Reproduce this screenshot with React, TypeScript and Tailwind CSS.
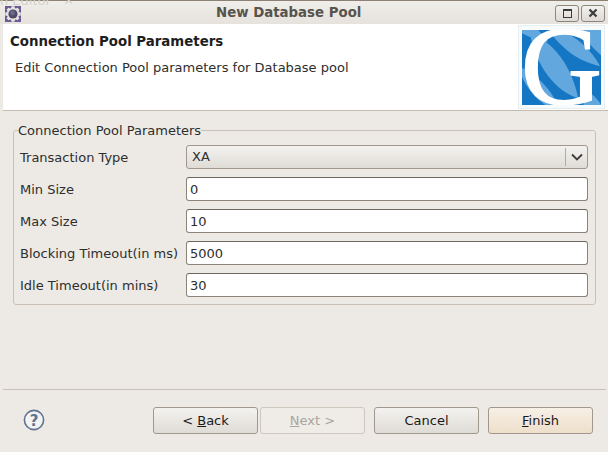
const FONT = "font-['DejaVu_Sans',sans-serif]";

function AppIcon() {
  const teeth = [0, 45, 90, 135, 180, 225, 270, 315];
  return (
    <svg width="16" height="16" viewBox="0 0 16 16">
      <rect width="16" height="16" fill="#6b5a94" />
      {teeth.map((a) => (
        <rect key={a} x="6.5" y="0.5" width="3" height="15" fill="#e6e4e0" transform={`rotate(${a} 8 8)`} />
      ))}
      <circle cx="8" cy="8" r="6.2" fill="#e6e4e0" />
      <circle cx="8" cy="8" r="4.6" fill="#4f4a68" />
      <circle cx="7.5" cy="7" r="2.4" fill="#6c688a" />
    </svg>
  );
}

function WindowButton({ children }: { children: React.ReactNode }) {
  return (
    <div className="w-6 h-[17px] flex items-center justify-center border border-[#8d877e] rounded-[3px] bg-gradient-to-b from-[#f3f1ee] to-[#dedad4]">
      {children}
    </div>
  );
}

function Logo() {
  const feathers = [
    "M8 4 C 30 10 50 36 56 68 C 34 62 14 36 8 4 Z",
    "M24 -4 C 46 0 66 14 78 36 C 56 32 36 16 24 -4 Z",
    "M-4 36 C 14 44 32 60 38 82 C 18 76 2 58 -4 36 Z",
    "M-2 -2 L 14 -2 C 20 4 24 8 26 12 C 14 10 4 6 -2 2 Z",
    "M58 -2 L 80 -2 L 80 26 C 70 18 62 8 58 -2 Z",
    "M60 58 C 70 62 76 70 80 76 L 62 78 Z",
  ];
  return (
    <div className="w-[87px] h-[84px] border border-[#e6eef2] bg-[#f7fbfc] flex items-center justify-center">
      <svg width="79" height="75" viewBox="0 0 79 75" className="block">
        <rect width="79" height="75" fill="#1576c4" />
        {feathers.map((d) => (
          <path key={d} d={d} fill="#62a8de" />
        ))}
        <text
          x="-1"
          y="74"
          fontFamily="'Liberation Serif', serif"
          fontSize="112"
          fill="#ffffff"
          stroke="#ffffff"
          strokeWidth="1.5"
        >
          G
        </text>
      </svg>
    </div>
  );
}

function Field({ label, value }: { label: string; value: string }) {
  return (
    <div className="flex items-center h-6">
      <label className="w-[166px] pt-[1px] text-[13px] text-[#2e2e2e] whitespace-nowrap">{label}</label>
      <input
        readOnly
        value={value}
        className="w-[402px] h-6 pl-[3px] bg-white border border-[#8b8379] border-t-[#6f675d] rounded-[3px] text-[13px] text-[#2e2e2e] outline-none"
      />
    </div>
  );
}

function WizardButton({
  children,
  disabled,
  primary,
}: {
  children: React.ReactNode;
  disabled?: boolean;
  primary?: boolean;
}) {
  let look = "border-[#a0988d] from-[#f4f2ef] to-[#dfdcd6] text-[#1a1a1a]";
  if (primary) look = "border-[#a0988d] from-[#f7f0e6] to-[#eedfcb] text-[#1a1a1a]";
  if (disabled) look = "border-[#cdc7be] from-[#efece8] to-[#efece8] text-[#a9a49c]";
  return (
    <button className={`w-[105px] h-[27px] border rounded-[3px] bg-gradient-to-b text-[13px] ${look}`}>
      {children}
    </button>
  );
}

export default function App() {
  return (
    <div className={`${FONT} relative w-[608px] h-[452px] overflow-hidden flex flex-col bg-[#edeae5]`}>
      {/* title bar */}
      <div className="relative h-6 shrink-0 flex items-center border-t border-[#8c8174] bg-gradient-to-b from-[#f0eeea] to-[#e6e2dc]">
        <span className="absolute left-0 -top-[10px] text-[13px] text-[#d5d1ca] whitespace-pre">n Editor   ✕</span>
        <div className="relative ml-[5px] mt-[2px]">
          <AppIcon />
        </div>
        <span className="absolute left-[216px] top-[2px] text-[13.33px] font-bold text-[#57534d]">New Database Pool</span>
        <div className="ml-auto mr-[3px] flex gap-[2px] mt-[1px]">
          <WindowButton>
            <div className="w-[9px] h-[9px] border border-[#3c3c3c] border-t-2" />
          </WindowButton>
          <WindowButton>
            <svg width="10" height="10" viewBox="0 0 10 10">
              <path d="M1.5 1.5 L8.5 8.5 M8.5 1.5 L1.5 8.5" stroke="#3c3c3c" strokeWidth="2.2" />
            </svg>
          </WindowButton>
        </div>
      </div>

      {/* header */}
      <div className="ml-[3px] h-[87px] shrink-0 flex justify-between bg-white border-b border-[#c4bcb1]">
        <div className="pl-[7px] pt-[9px]">
          <h1 className="text-[13.33px] leading-[17px] font-bold text-[#1e1e1e]">Connection Pool Parameters</h1>
          <p className="mt-[9px] ml-[5px] text-[13px] leading-[17px] text-[#2e2e2e]">
            Edit Connection Pool parameters for Database pool
          </p>
        </div>
        <div className="mr-[3px] pt-[1px]">
          <Logo />
        </div>
      </div>

      {/* form */}
      <div className="h-[278px] shrink-0 pl-[13px] pt-[11px]">
        <fieldset className="w-[583px] h-[183px] border border-[#c9c1b6] rounded-[3px] pl-[6px] pt-[6px]">
          <legend className="-ml-[2px] text-[13px] leading-[17px] text-[#2e2e2e]">Connection Pool Parameters</legend>
          <div className="flex flex-col gap-2">
            <div className="flex items-center h-6">
              <label className="w-[166px] pt-[1px] text-[13px] text-[#2e2e2e]">Transaction Type</label>
              <div className="w-[402px] h-6 flex items-center pl-[5px] border border-[#a0988d] rounded-[3px] bg-gradient-to-b from-[#f4f2ef] to-[#dfdcd6] text-[13px] text-[#2e2e2e]">
                <span>XA</span>
                <div className="ml-auto w-[22px] h-[18px] flex items-center justify-center border-l border-[#b3aca1]">
                  <svg width="12" height="8" viewBox="0 0 12 8">
                    <path d="M1 1.5 L6 6.5 L11 1.5" fill="none" stroke="#3c3c3c" strokeWidth="1.8" />
                  </svg>
                </div>
              </div>
            </div>
            <Field label="Min Size" value="0" />
            <Field label="Max Size" value="10" />
            <Field label="Blocking Timeout(in ms)" value="5000" />
            <Field label="Idle Timeout(in mins)" value="30" />
          </div>
        </fieldset>
      </div>

      {/* footer */}
      <div className="ml-[3px] mr-[2px] border-t border-[#c9c1b6] flex items-start pt-[17px]">
        <svg width="22" height="22" viewBox="0 0 22 22" className="ml-[20px] mt-[2px]">
          <circle cx="11" cy="11" r="9.6" fill="#f3f3f2" stroke="#5f7391" strokeWidth="1.6" />
          <text x="11" y="16.5" textAnchor="middle" fontFamily="'DejaVu Sans', sans-serif" fontWeight="700" fontSize="15" fill="#5f7391">
            ?
          </text>
        </svg>
        <div className="ml-[108px] flex">
          <WizardButton>
            &lt; <u>B</u>ack
          </WizardButton>
          <div className="ml-[2px]">
            <WizardButton disabled>
              <u>N</u>ext &gt;
            </WizardButton>
          </div>
          <div className="ml-[9px]">
            <WizardButton>Cancel</WizardButton>
          </div>
          <div className="ml-[9px]">
            <WizardButton primary>
              <u>F</u>inish
            </WizardButton>
          </div>
        </div>
      </div>
    </div>
  );
}
